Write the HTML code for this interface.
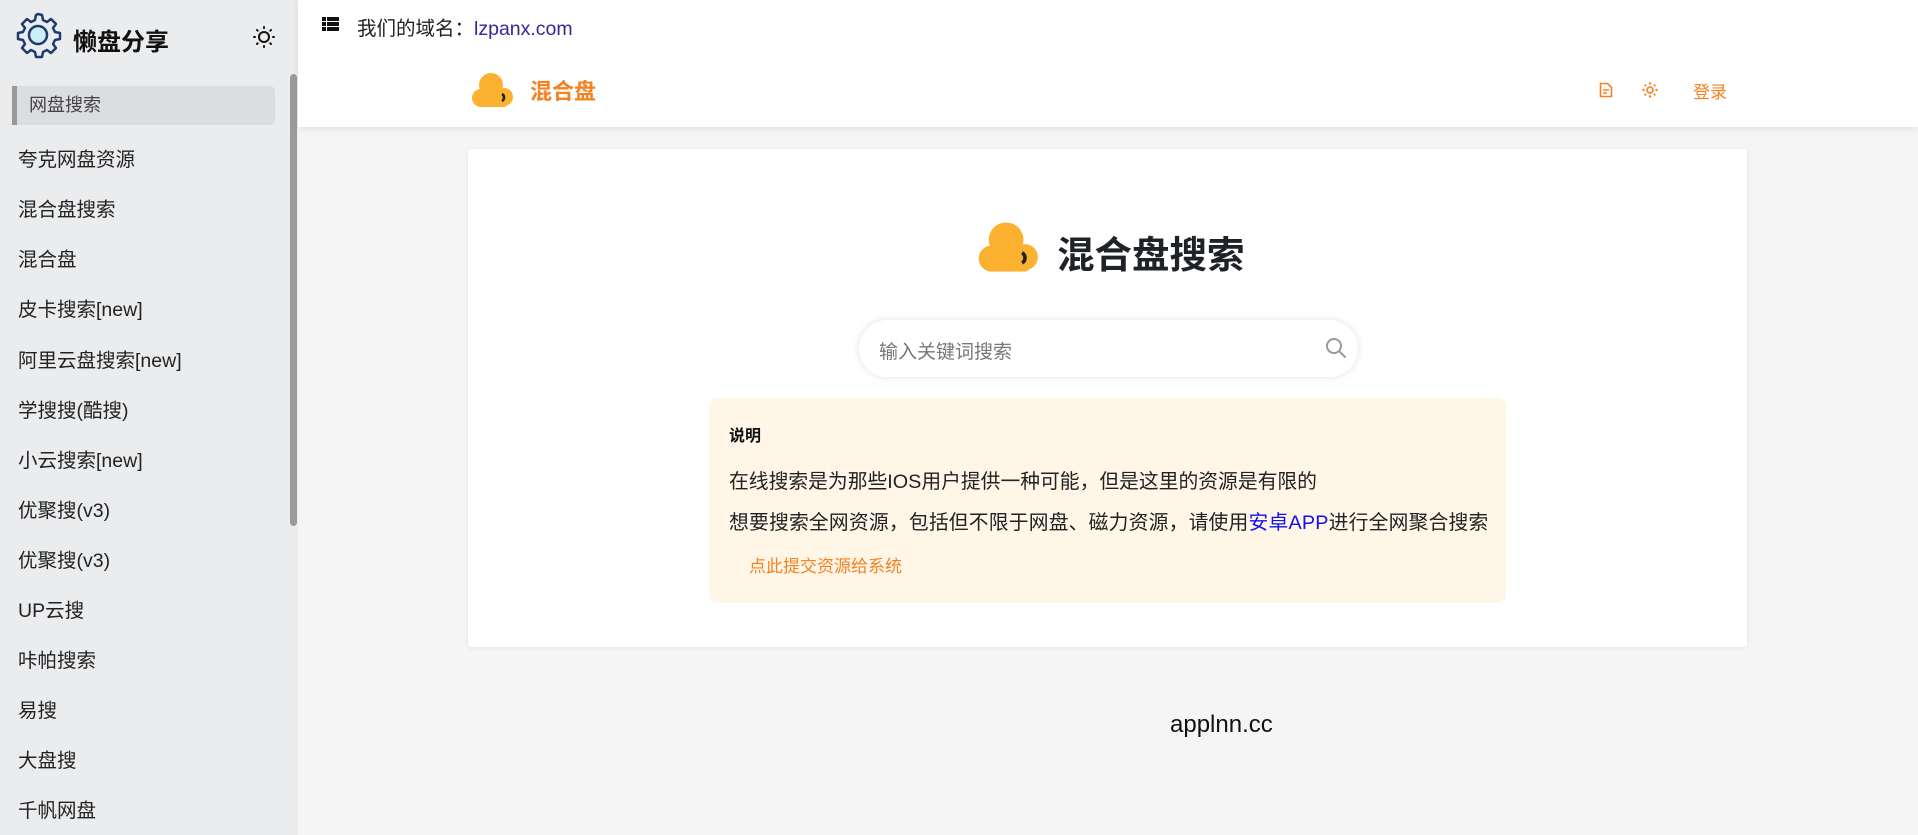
<!DOCTYPE html>
<html><head><meta charset="utf-8"><style>
*{margin:0;padding:0;box-sizing:border-box}
body{width:1918px;height:835px;overflow:hidden;background:#f5f5f5;font-family:"Liberation Sans","Noto Sans CJK SC",sans-serif;position:relative;color:#222}
.a{position:absolute;white-space:nowrap}
#side{position:absolute;left:0;top:0;width:298px;height:835px;background:#ebecee}
.it{position:absolute;left:18px;font-size:19.5px;color:#222;line-height:24px}
</style></head><body>
<div id="side">
<svg class="a" style="left:13px;top:10px" width="50" height="50" viewBox="0 0 50 50"><path d="M25 4l4 1 1 5 4 2 4-3 5 5-3 4 2 4 5 1v6l-5 1-2 4 3 4-5 5-4-3-4 2-1 5h-6l-1-5-4-2-4 3-5-5 3-4-2-4-5-1v-6l5-1 2-4-3-4 5-5 4 3 4-2 1-5z" fill="none" stroke="#1d3b6e" stroke-width="2.5" stroke-linejoin="round"/><circle cx="25" cy="25" r="9" fill="#cdeef3" stroke="#1d3b6e" stroke-width="2.5"/></svg>
<div class="a" style="left:73px;top:22px;font-size:24px;font-weight:bold;color:#111">懒盘分享</div>
<svg class="a" style="left:253px;top:26px" width="22" height="22" viewBox="0 0 22 22"><circle cx="11" cy="11" r="5" fill="none" stroke="#111" stroke-width="2"/><g stroke="#111" stroke-width="2" stroke-linecap="round"><path d="M11 1v1M11 20v1M1 11h1M20 11h1M4 4l.7.7M17.3 17.3l.7.7M4 18l.7-.7M17.3 4.7l.7-.7"/></g></svg>
<div class="a" style="left:12px;top:86px;width:263px;height:39px;background:#dcdde1;border-left:5px solid #999;border-radius:0 5px 5px 0"></div>
<div class="it" style="left:29px;top:93px;font-size:18px;color:#444">网盘搜索</div>
<div class="it" style="top:148px">夸克网盘资源</div>
<div class="it" style="top:198px">混合盘搜索</div>
<div class="it" style="top:248px">混合盘</div>
<div class="it" style="top:298px">皮卡搜索[new]</div>
<div class="it" style="top:349px">阿里云盘搜索[new]</div>
<div class="it" style="top:399px">学搜搜(酷搜)</div>
<div class="it" style="top:449px">小云搜索[new]</div>
<div class="it" style="top:499px">优聚搜(v3)</div>
<div class="it" style="top:549px">优聚搜(v3)</div>
<div class="it" style="top:599px">UP云搜</div>
<div class="it" style="top:649px">咔帕搜索</div>
<div class="it" style="top:699px">易搜</div>
<div class="it" style="top:749px">大盘搜</div>
<div class="it" style="top:799px">千帆网盘</div>
<div class="a" style="left:290px;top:74px;width:7px;height:452px;background:#9a9a9c;border-radius:4px"></div>
</div>
<div class="a" style="left:298px;top:0;width:1620px;height:127px;background:#fff;box-shadow:0 2px 6px rgba(0,0,0,.08)"></div>
<svg class="a" style="left:322px;top:17px" width="17" height="14" viewBox="0 0 17 14"><g fill="#111"><rect x="0" y="0" width="4" height="4"/><rect x="5" y="0" width="12" height="4"/><rect x="0" y="5" width="4" height="4"/><rect x="5" y="5" width="12" height="4"/><rect x="0" y="10" width="4" height="4"/><rect x="5" y="10" width="12" height="4"/></g></svg>
<div class="a" style="left:357px;top:12px;font-size:19.5px;color:#222">我们的域名：<span style="color:#3b2592">lzpanx.com</span></div>
<svg class="a" style="left:472px;top:72px" width="42" height="36" viewBox="0 0 42 36"><g fill="#fcb131"><circle cx="19" cy="13" r="12"/><circle cx="9" cy="26" r="9"/><circle cx="32" cy="25" r="9"/><rect x="9" y="20" width="23" height="15"/><rect x="5" y="28" width="30" height="7" rx="3"/></g><path d="M30 22a4 4 0 0 1 0 7" fill="none" stroke="#222" stroke-width="2.5"/></svg>
<div class="a" style="left:530px;top:74px;font-size:22px;font-weight:bold;color:#f5811f">混合盘</div>
<svg class="a" style="left:1599px;top:82px" width="14" height="16" viewBox="0 0 14 16"><path d="M1.5 1.5h7l4 4v9h-11z" fill="none" stroke="#f5811f" stroke-width="1.6"/><path d="M4 8h6M4 11h4" stroke="#f5811f" stroke-width="1.5"/></svg>
<svg class="a" style="left:1642px;top:82px" width="16" height="16" viewBox="0 0 16 16"><circle cx="8" cy="8" r="3" fill="none" stroke="#f5811f" stroke-width="1.6"/><g fill="#f5811f"><circle cx="8" cy="1.5" r="1.2"/><circle cx="8" cy="14.5" r="1.2"/><circle cx="1.5" cy="8" r="1.2"/><circle cx="14.5" cy="8" r="1.2"/><circle cx="3.4" cy="3.4" r="1.1"/><circle cx="12.6" cy="12.6" r="1.1"/><circle cx="3.4" cy="12.6" r="1.1"/><circle cx="12.6" cy="3.4" r="1.1"/></g></svg>
<div class="a" style="left:1693px;top:78px;font-size:17px;color:#f5811f">登录</div>
<div class="a" style="left:468px;top:149px;width:1279px;height:498px;background:#fff;border-radius:3px;box-shadow:0 1px 4px rgba(0,0,0,.08)"></div>
<svg class="a" style="left:977px;top:221px" width="64" height="52" viewBox="0 0 42 36"><g fill="#fcb131"><circle cx="19" cy="13" r="12"/><circle cx="9" cy="26" r="9"/><circle cx="32" cy="25" r="9"/><rect x="9" y="20" width="23" height="15"/><rect x="5" y="28" width="30" height="7" rx="3"/></g><path d="M30 22a4 4 0 0 1 0 7" fill="none" stroke="#222" stroke-width="2.5"/></svg>
<div class="a" style="left:1057px;top:224px;font-size:37.5px;font-weight:bold;color:#1f2329">混合盘搜索</div>
<div class="a" style="left:859px;top:320px;width:499px;height:57px;background:#fff;border-radius:29px;box-shadow:0 0 8px rgba(0,0,0,.12)"></div>
<div class="a" style="left:879px;top:337px;font-size:19px;color:#777">输入关键词搜索</div>
<svg class="a" style="left:1325px;top:337px" width="22" height="22" viewBox="0 0 22 22"><circle cx="9" cy="9" r="7" fill="none" stroke="#999" stroke-width="2"/><path d="M14 14l6 6" stroke="#999" stroke-width="2" stroke-linecap="round"/></svg>
<div class="a" style="left:709px;top:398px;width:797px;height:205px;background:#fff6e8;border-radius:8px"></div>
<div class="a" style="left:729px;top:422px;font-size:16px;font-weight:bold;color:#111">说明</div>
<div class="a" style="left:729px;top:465px;font-size:19.8px;color:#222">在线搜索是为那些IOS用户提供一种可能，但是这里的资源是有限的</div>
<div class="a" style="left:729px;top:506px;font-size:19.8px;color:#222;letter-spacing:0.2px">想要搜索全网资源，包括但不限于网盘、磁力资源，请使用<span style="color:#1010f0">安卓APP</span>进行全网聚合搜索</div>
<div class="a" style="left:749px;top:552px;font-size:17px;color:#f5811f">点此提交资源给系统</div>
<div class="a" style="left:1170px;top:711px;font-size:24px;color:#111">applnn.cc</div>
</body></html>
